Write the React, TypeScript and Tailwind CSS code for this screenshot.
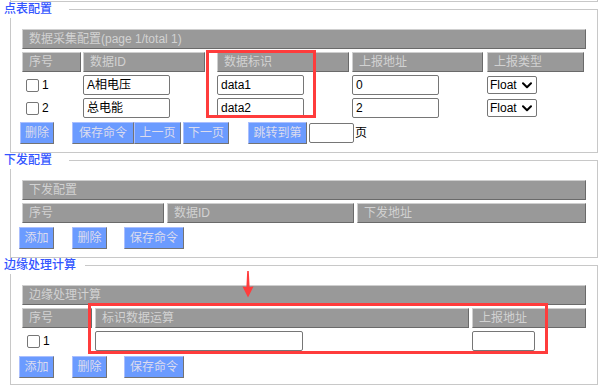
import React from "react";

const hdr =
  "h-[20px] box-border bg-[#999999] border-t border-l border-b border-r border-t-[#cfcfcf] border-l-[#cfcfcf] border-b-[#6a6a6a] border-r-[#6a6a6a] text-[#d2d2d2] text-[12px] leading-[18px] pl-[6px] whitespace-nowrap overflow-hidden";
const inp =
  "h-[20px] box-border border border-[#767676] rounded-[2px] bg-white px-[3px] text-[12px] leading-[18px] text-black whitespace-nowrap overflow-hidden";
const btn =
  "h-[22px] box-border bg-[#6b9bff] border border-t-[#aabfff] border-l-[#aabfff] border-b-[#737373] border-r-[#737373] text-[#dcdcee] text-[12px] leading-[20px] text-center whitespace-nowrap";

function Check() {
  return <div className="w-[13px] h-[13px] box-border border border-[#767676] rounded-[2px] bg-white shrink-0" />;
}

function Chevron() {
  return (
    <svg width="10" height="7" viewBox="0 0 10 7" className="shrink-0">
      <path d="M1 1.2 L5 5.2 L9 1.2" fill="none" stroke="#000" strokeWidth="2" strokeLinecap="round" strokeLinejoin="round" />
    </svg>
  );
}

function Select() {
  return (
    <div className="w-[50px] h-[18px] box-border border border-[#767676] rounded-[2px] bg-white flex items-center pl-[2px] text-[12px] leading-[16px] text-black">
      <span>Float</span>
      <span className="ml-[5px] flex items-center">
        <Chevron />
      </span>
    </div>
  );
}

function Legend({ text, w }: { text: string; w: string }) {
  return (
    <div className="flex h-[16px]">
      <div className={`${w} pl-[4px] text-[12px] leading-[15px] font-medium text-[#3355ff] whitespace-nowrap`}>{text}</div>
      <div className="flex-1 mt-[7px] mr-[12px] border-t border-r border-[#c8c8c8]" />
    </div>
  );
}

export default function App() {
  return (
    <div className="relative w-[610px] h-[386px] bg-white overflow-hidden font-['Liberation_Sans','Noto_Sans_CJK_SC',sans-serif]">
      <div className="h-[2px] ml-[10px] mr-[12px] border-l border-r border-b border-[#c8c8c8]" />

      {/* Section 1 */}
      <Legend text="点表配置" w="w-[69px]" />
      <div className="h-[135px] box-border ml-[10px] mr-[12px] border-l border-r border-b border-[#c8c8c8] pt-[11px] pl-[11px] pr-[10px] flex flex-col">
        <div className={`${hdr} w-[564px]`}>数据采集配置(page 1/total 1)</div>
        <div className="flex mt-[3px]">
          <div className={`${hdr} w-[59px]`}>序号</div>
          <div className={`${hdr} w-[122px] ml-[2px]`}>数据ID</div>
          <div className={`${hdr} w-[132px] ml-[12px]`}>数据标识</div>
          <div className={`${hdr} w-[131px] ml-[3px]`}>上报地址</div>
          <div className={`${hdr} w-[97px] ml-[4px]`}>上报类型</div>
        </div>
        {[
          ["1", "A相电压", "data1", "0"],
          ["2", "总电能", "data2", "2"],
        ].map((r) => (
          <div key={r[0]} className="flex items-center h-[20px] mt-[3px]">
            <div className="w-[61px] flex items-center pl-[4px]">
              <Check />
              <span className="ml-[3px] text-[12px] text-black">{r[0]}</span>
            </div>
            <div className="w-[134px]">
              <div className={`${inp} w-[87px]`}>{r[1]}</div>
            </div>
            <div className="w-[135px]">
              <div className={`${inp} w-[87px]`}>{r[2]}</div>
            </div>
            <div className="w-[135px]">
              <div className={`${inp} w-[87px]`}>{r[3]}</div>
            </div>
            <Select />
          </div>
        ))}
        <div className="flex items-center mt-[4px] -ml-[2px]">
          <div className={`${btn} w-[34px]`}>删除</div>
          <div className={`${btn} w-[62px] ml-[18px]`}>保存命令</div>
          <div className={`${btn} w-[47px]`}>上一页</div>
          <div className={`${btn} w-[46px] ml-[2px]`}>下一页</div>
          <div className={`${btn} w-[59px] ml-[19px]`}>跳转到第</div>
          <div className={`${inp} w-[45px] ml-[2px]`} />
          <span className="ml-[1px] text-[12px] text-black">页</span>
        </div>
      </div>

      {/* Section 2 */}
      <Legend text="下发配置" w="w-[69px]" />
      <div className="h-[89px] box-border ml-[10px] mr-[12px] border-l border-r border-b border-[#c8c8c8] pt-[11px] pl-[11px] pr-[10px] flex flex-col">
        <div className={`${hdr} w-[564px]`}>下发配置</div>
        <div className="flex mt-[3px]">
          <div className={`${hdr} w-[142px]`}>序号</div>
          <div className={`${hdr} w-[187px] ml-[3px]`}>数据ID</div>
          <div className={`${hdr} w-[229px] ml-[3px]`}>下发地址</div>
        </div>
        <div className="flex items-center mt-[4px] -ml-[3px]">
          <div className={`${btn} w-[35px]`}>添加</div>
          <div className={`${btn} w-[35px] ml-[18px]`}>删除</div>
          <div className={`${btn} w-[60px] ml-[17px]`}>保存命令</div>
        </div>
      </div>

      {/* Section 3 */}
      <Legend text="边缘处理计算" w="w-[85px]" />
      <div className="h-[111px] box-border ml-[10px] mr-[12px] border-l border-r border-b border-[#c8c8c8] pt-[11px] pl-[11px] pr-[10px] flex flex-col">
        <div className={`${hdr} w-[564px]`}>边缘处理计算</div>
        <div className="flex mt-[3px]">
          <div className={`${hdr} w-[70px]`}>序号</div>
          <div className={`${hdr} w-[374px] ml-[3px]`}>标识数据运算</div>
          <div className={`${hdr} w-[114px] ml-[3px]`}>上报地址</div>
        </div>
        <div className="flex items-center h-[20px] mt-[3px]">
          <div className="w-[73px] flex items-center pl-[5px]">
            <Check />
            <span className="ml-[3px] text-[12px] text-black">1</span>
          </div>
          <div className="w-[377px]">
            <div className={`${inp} w-[208px]`} />
          </div>
          <div className={`${inp} w-[63px]`} />
        </div>
        <div className="flex items-center mt-[5px] -ml-[3px]">
          <div className={`${btn} w-[35px]`}>添加</div>
          <div className={`${btn} w-[35px] ml-[18px]`}>删除</div>
          <div className={`${btn} w-[60px] ml-[17px]`}>保存命令</div>
        </div>
      </div>

      {/* Annotations */}
      <div className="absolute left-[206px] top-[50px] w-[110px] h-[68px] border-[3px] border-[#ff3c3c]" />
      <div className="absolute left-[88px] top-[303px] w-[460px] h-[51px] border-[3px] border-[#ff3c3c]" />
      <svg className="absolute left-[240px] top-[269px]" width="16" height="32" viewBox="0 0 16 32">
        <polygon points="7.2,2 8.8,2 9.6,18 13.5,17.5 8,28.5 2.5,17.5 6.4,18" fill="#ff3c3c" />
      </svg>
    </div>
  );
}
